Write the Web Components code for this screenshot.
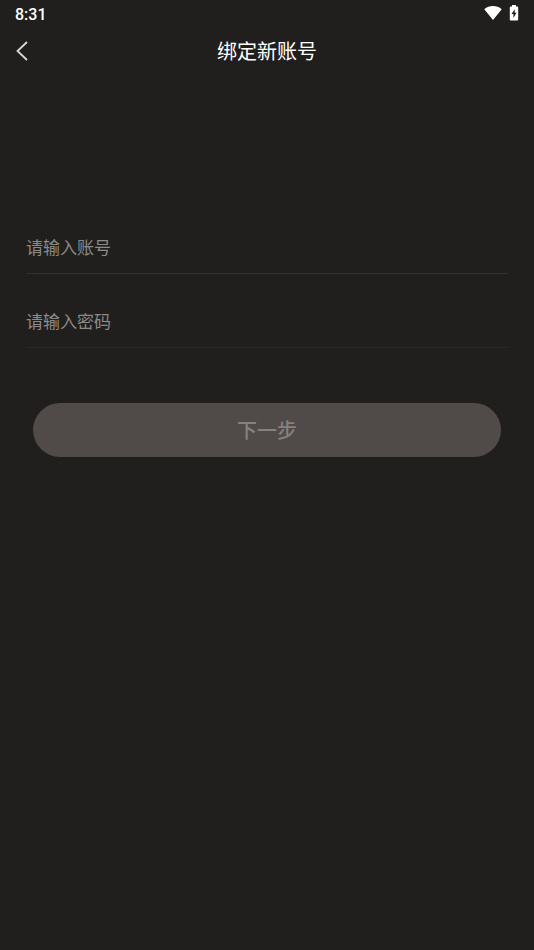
<!DOCTYPE html>
<html lang="zh-CN">
<head>
<meta charset="utf-8">
<meta name="viewport" content="width=device-width, initial-scale=1">
<title>绑定新账号</title>
<style>
  body {
    margin: 0;
    background: #211f1d;
    color: #fff;
    font-family: Roboto, "Noto Sans CJK SC", sans-serif;
  }
</style>
</head>
<body>
<bind-page>
  <status-bar>8:31</status-bar>
  <nav-header>绑定新账号</nav-header>
  <bind-form>
    <line-field label="请输入账号" type="text" autocomplete="username"></line-field>
    <line-field label="请输入密码" type="password" autocomplete="current-password" style="--line: #2a2826"></line-field>
    <pill-button slot="action">下一步</pill-button>
  </bind-form>
</bind-page>
<script>
  class BaseElement extends HTMLElement {
    constructor() {
      super();
      this.attachShadow({ mode: 'open' }).innerHTML = this.constructor.markup;
    }
  }

  class BindPage extends BaseElement {
    static markup = `
      <style>
        :host { display: flex; flex-direction: column; min-height: 100vh; }
      </style>
      <slot></slot>`;
  }

  class StatusBar extends BaseElement {
    static markup = `
      <style>
        :host {
          display: flex; align-items: center; justify-content: space-between;
          height: 28px; padding: 0 15px; box-sizing: border-box;
          font-size: 16px; line-height: 20px; font-weight: 500;
        }
        .time { padding-top: 2px; }
        .icons { display: flex; align-items: center; gap: 7px; padding-bottom: 2px; }
        svg { display: block; fill: #fff; }
      </style>
      <span class="time"><slot></slot></span>
      <div class="icons">
        <svg width="18" height="14" viewBox="0 0 18 14" aria-hidden="true">
          <path d="M.3 3.2C2.7 1.1 5.6 0 9 0s6.300 1.100 8.700 3.200L9 14z"/>
        </svg>
        <svg width="10" height="16" viewBox="0 0 10 16" aria-hidden="true">
          <path fill-rule="evenodd" d="M3 0h4v1.500h1.300c.5 0 .9.400.9.900v12.200c0 .5-.4.900-.9.900H1.700c-.5 0-.9-.4-.9-.9V2.400c0-.5.4-.9.900-.9H3zM5.700 4.200 2.500 9.100h1.900v4L7.500 7.800H5.700z"/>
        </svg>
      </div>`;
  }

  class NavHeader extends BaseElement {
    static markup = `
      <style>
        :host {
          display: grid; grid-template-columns: 44px 1fr 44px; align-items: center;
          height: 46px;
        }
        button {
          display: grid; place-items: center; width: 44px; height: 46px;
          padding: 0; border: 0; background: none; color: #d8d7d6; cursor: pointer;
        }
        svg { fill: none; stroke: currentColor; stroke-width: 1.8; }
        h1 {
          margin: 0; padding-top: 2px; text-align: center;
          font-size: 20px; line-height: 28px; font-weight: 400;
        }
      </style>
      <button type="button" aria-label="返回">
        <svg width="12" height="20" viewBox="0 0 12 20"><path d="M11 1 1.500 10 11 19"/></svg>
      </button>
      <h1><slot></slot></h1>`;
  }

  class BindForm extends BaseElement {
    static markup = `
      <style>
        :host { display: block; padding: 147px 26px 0; }
        form { display: flex; flex-direction: column; }
        .fields { display: flex; flex-direction: column; gap: 21px; }
        .action { padding: 55px 7px 0; }
      </style>
      <form>
        <div class="fields"><slot></slot></div>
        <div class="action"><slot name="action"></slot></div>
      </form>`;
  }

  class LineField extends BaseElement {
    static markup = `
      <style>
        :host { display: block; border-bottom: 1px solid var(--line, #32302e); }
        input {
          display: block; width: 100%; height: 52px; box-sizing: border-box;
          margin: 0; padding: 2px 0 0; border: 0; outline: 0; background: none;
          color: #fff; font-family: inherit; font-size: 17px; line-height: 24px;
        }
        input::placeholder { color: #8b8a88; opacity: 1; }
      </style>
      <input>`;
    connectedCallback() {
      const input = this.shadowRoot.querySelector('input');
      const label = this.getAttribute('label');
      input.type = this.getAttribute('type');
      input.autocomplete = this.getAttribute('autocomplete');
      input.placeholder = label;
      input.setAttribute('aria-label', label);
    }
  }

  class PillButton extends BaseElement {
    static markup = `
      <style>
        :host { display: block; }
        button {
          display: block; width: 100%; height: 54px; padding: 2px 0 0; border: 0;
          border-radius: 27px; background: #504a48; color: #848180;
          font-family: inherit; font-size: 20px; line-height: 28px; font-weight: 500;
        }
      </style>
      <button type="button" disabled><slot></slot></button>`;
  }

  customElements.define('bind-page', BindPage);
  customElements.define('status-bar', StatusBar);
  customElements.define('nav-header', NavHeader);
  customElements.define('bind-form', BindForm);
  customElements.define('line-field', LineField);
  customElements.define('pill-button', PillButton);
</script>
</body>
</html>
